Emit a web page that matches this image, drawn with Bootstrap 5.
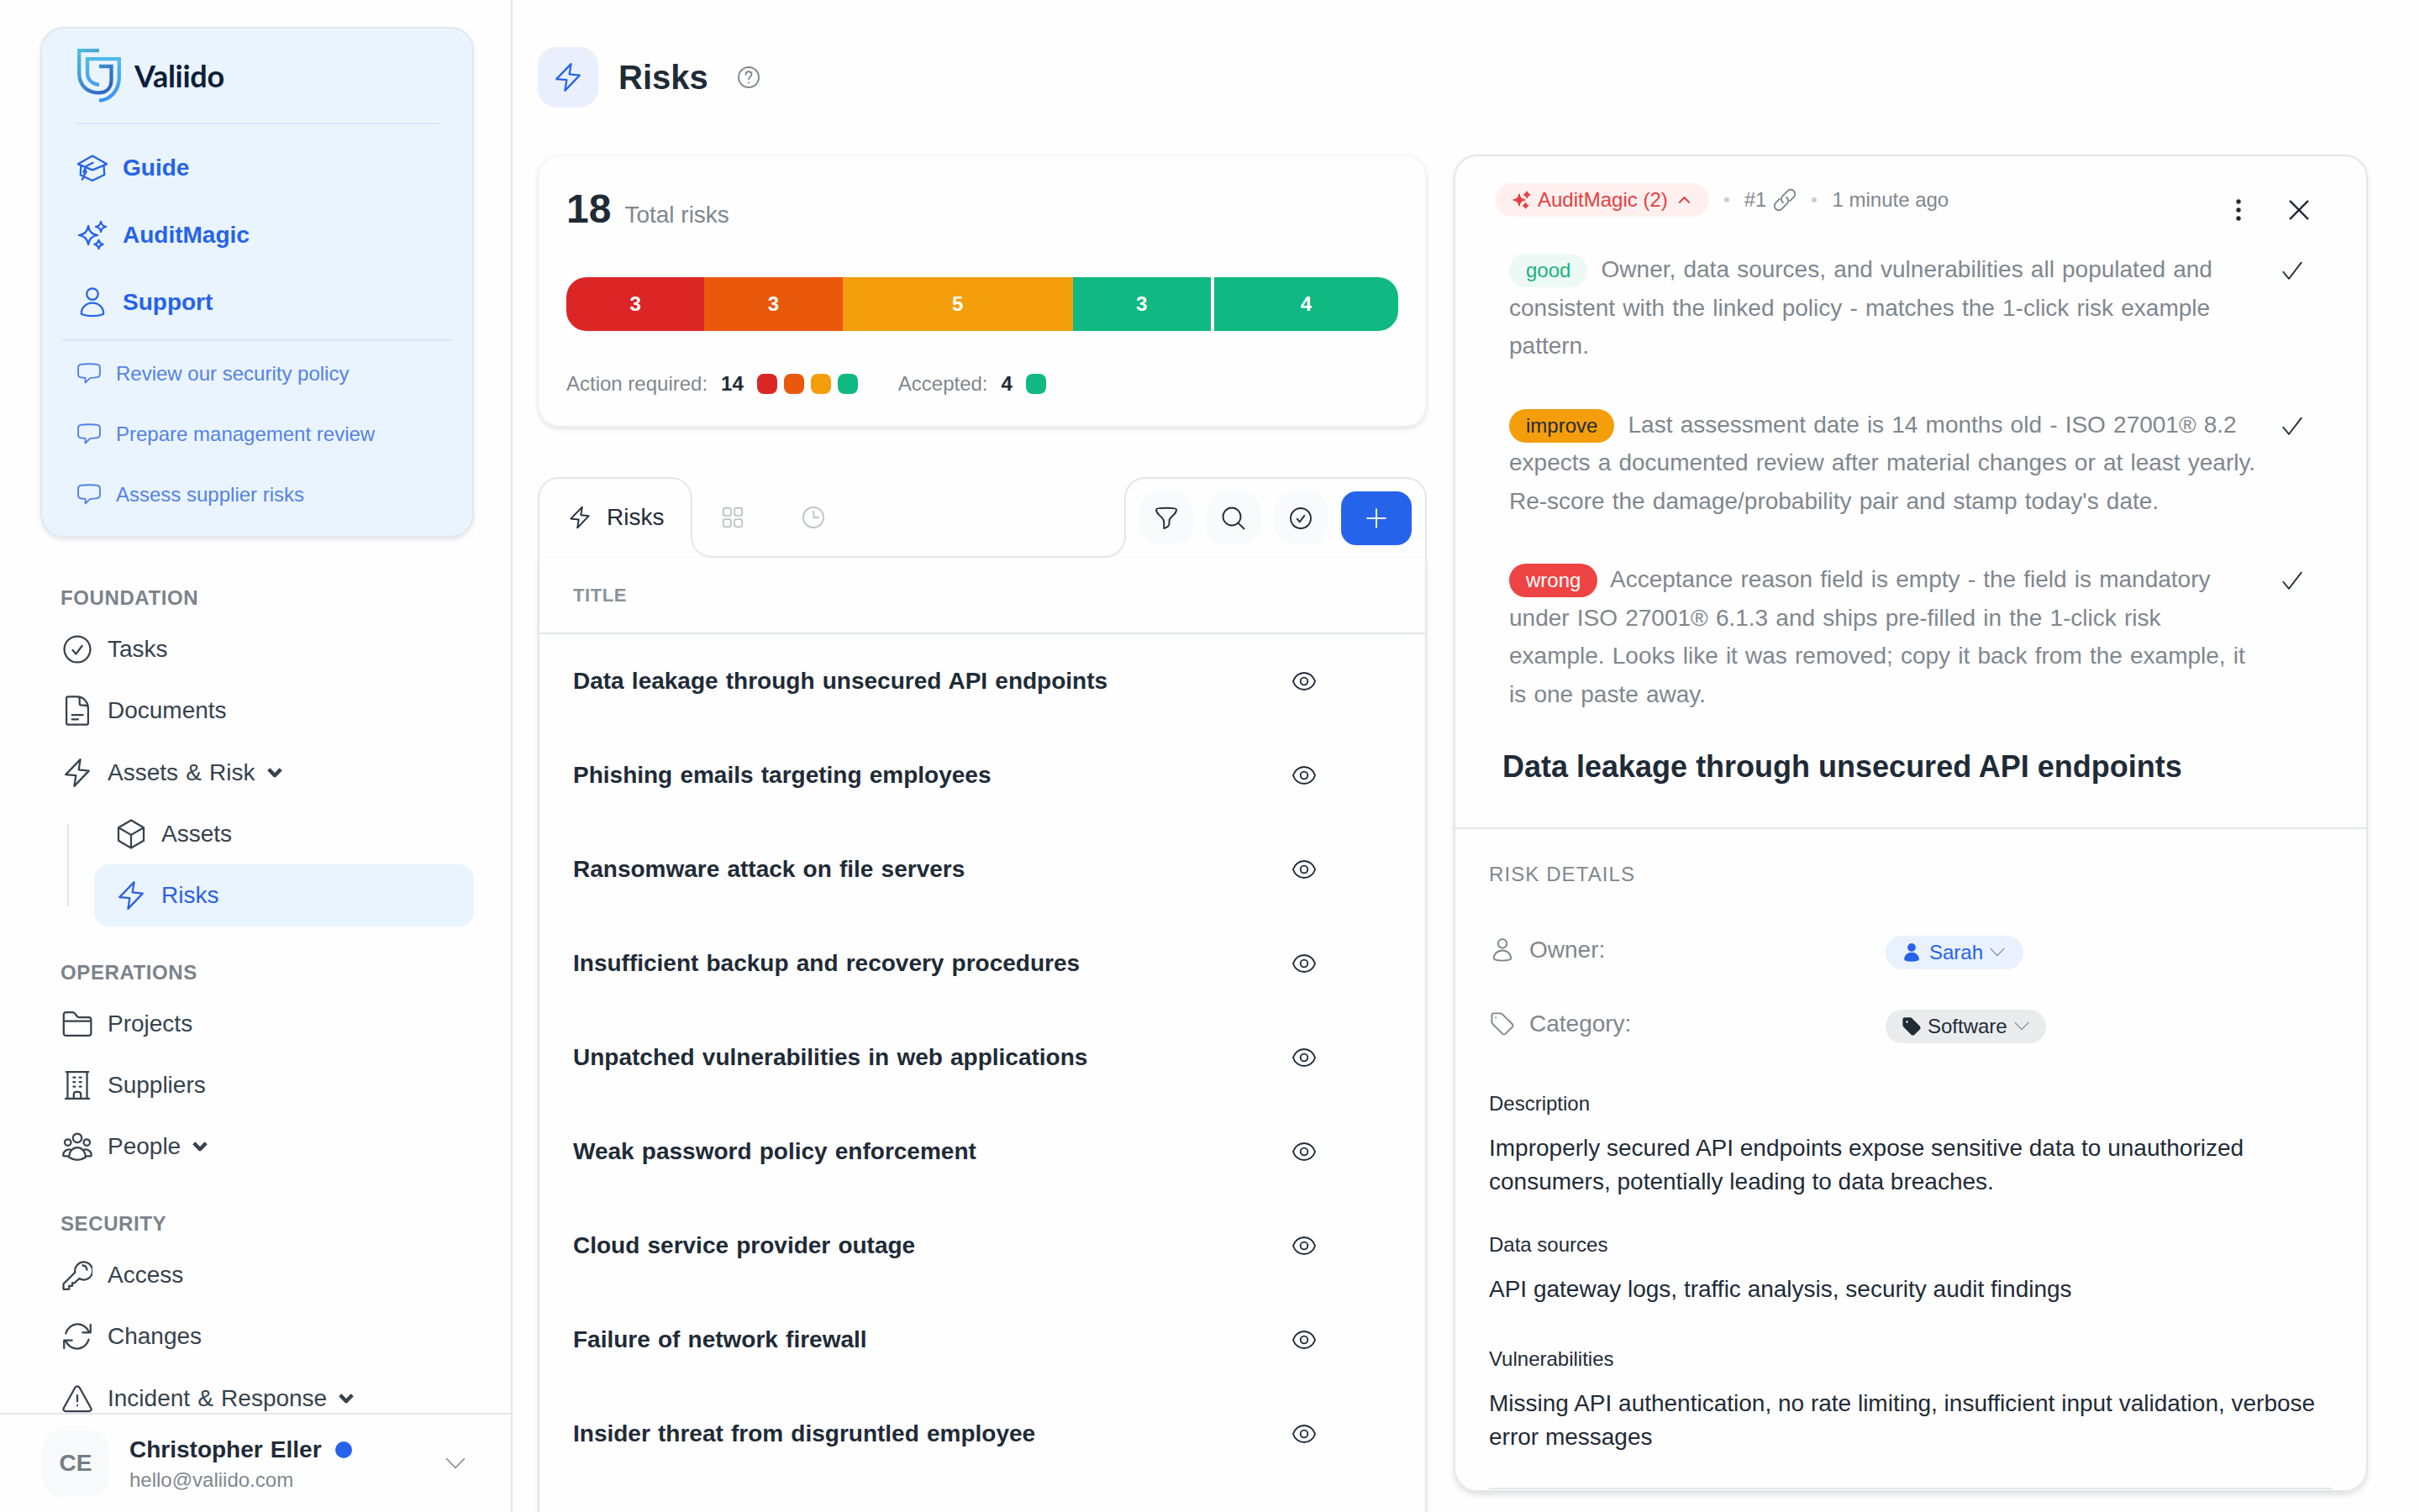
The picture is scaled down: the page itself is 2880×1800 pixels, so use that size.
<!DOCTYPE html>
<html lang="en">

<head>
    <meta charset="UTF-8">
    <meta name="viewport" content="width=device-width, initial-scale=1.0">
    <title>Risks - Valiido</title>
    <!-- Bootstrap CSS -->
    <link href="https://cdn.jsdelivr.net/npm/bootstrap@5.3.0/dist/css/bootstrap.min.css" rel="stylesheet">
    <style>
        :root {
            --ink: #1f2b37;
            --nav-ink: #36424d;
            --muted: #7f878e;
            --line: #e4e6e9;
            --blue: #2563eb;
            --sky: #eaf4fe;
        }

        body {
            font-family: "Liberation Sans", Arial, sans-serif;
            font-size: 28px;
            line-height: 42px;
            color: var(--ink);
            background: #fefefe;
            height: 1800px;
            overflow: hidden;
        }

        a {
            color: inherit;
            text-decoration: none;
        }

        .icon {
            flex: none;
            width: 28px;
            height: 28px;
            fill: none;
            stroke: currentColor;
            stroke-width: 1.6;
            stroke-linecap: round;
            stroke-linejoin: round;
        }

        .icon-lg {
            width: 36px;
            height: 36px;
            stroke-width: 1.5;
        }

        .icon-md {
            width: 26px;
            height: 26px;
            stroke-width: 2.2;
        }

        .icon-solid {
            width: 22px;
            height: 22px;
            fill: currentColor;
        }

        .fs-24 {
            font-size: 24px;
            line-height: 36px;
        }

        .muted {
            color: var(--muted);
        }

        .side-link,
        .risk-row,
        .note p,
        .account-name {
            word-spacing: 1.4px;
        }

        /* Sidebar */
        .sidebar {
            width: 610px;
            border-right: 2px solid var(--line);
        }

        .sidebar-scroll {
            height: 1682px;
            padding: 32px 44px 0 48px;
        }

        .promo {
            height: 608px;
            padding: 0 24px;
            background: var(--sky);
            border: 2px solid #e1e7ed;
            border-radius: 28px;
            box-shadow: 0 3px 5px rgba(30, 40, 60, .1);
        }

        .brand {
            height: 114px;
            margin: 0 16px;
            padding: 24px 0 0 2px;
            border-bottom: 2px solid #d9e5f5;
        }

        .brand-name {
            font-family: Lato, "Liberation Sans", sans-serif;
            font-size: 36px;
            font-weight: 700;
            line-height: 64px;
            letter-spacing: -.3px;
            margin-left: 16px;
            color: #0b1f3a;
        }

        .promo-main {
            padding-top: 12px;
            height: 258px;
            border-bottom: 2px solid #d9e5f5;
            font-weight: 700;
            color: var(--blue);
        }

        .promo-main a {
            height: 80px;
            padding-left: 18px;
            gap: 18px;
        }

        .promo-sub {
            padding-top: 3px;
        }

        .promo-sub a {
            height: 72px;
            padding-left: 18px;
            gap: 18px;
            font-size: 24px;
            color: #5382e6;
        }

        .nav-title {
            height: 79.8px;
            padding: 37px 0 0 24px;
            font-size: 24px;
            line-height: 36px;
            font-weight: 700;
            letter-spacing: .6px;
            color: #7b838b;
        }

        .first-title {
            margin-top: 16.8px;
        }

        .side-link {
            height: 73.2px;
            padding-left: 26px;
            gap: 18px;
            color: var(--nav-ink);
            border-radius: 18px;
        }

        .subnav {
            margin-left: 32px;
            padding-left: 32px;
            position: relative;
        }

        .subnav::before {
            content: "";
            position: absolute;
            left: 0;
            top: 24px;
            bottom: 24px;
            width: 2px;
            background: var(--line);
        }

        .side-link.active {
            background: var(--sky);
            color: #2b61e2;
        }

        .caret {
            width: 18px;
            height: 14px;
            stroke-width: 4.5;
            stroke-linecap: butt;
            margin-left: -4px;
        }

        .account {
            height: 118px;
            padding: 0 54px 0 50px;
            border-top: 2px solid var(--line);
            background: #fefefe;
        }

        .account-name {
            line-height: 36px;
        }

        .avatar {
            width: 80px;
            height: 80px;
            border-radius: 24px;
            background: #f8f9fb;
            color: #747d86;
            font-weight: 700;
        }

        .status-dot {
            width: 20px;
            height: 20px;
            background: var(--blue);
        }

        .chevron {
            width: 24px;
            height: 14px;
        }

        .chevron-sm {
            width: 18px;
            height: 11px;
            margin-left: 8px;
        }

        /* Main */
        .main-area {
            padding: 0 62px 0 30px;
        }

        .page-head {
            height: 184px;
        }

        .page-icon {
            width: 72px;
            height: 72px;
            border-radius: 22px;
            background: #e9effd;
            color: var(--blue);
        }

        .page-head h1 {
            font-size: 40px;
            line-height: 60px;
            font-weight: 700;
            margin: 0 34px 0 24px;
        }

        .left-col {
            width: 1058px;
        }

        .stats {
            height: 324px;
            padding: 33px 32px 0;
            border: 2px solid #f5f5f7;
            border-radius: 26px;
            box-shadow: 0 3px 5px rgba(30, 40, 60, .13);
        }

        .total {
            font-size: 48px;
            line-height: 60px;
            font-weight: 700;
        }

        .risk-bar {
            height: 64px;
            margin-top: 51px;
            border-radius: 24px;
            font-size: 24px;
            font-weight: 700;
            color: #fff;
        }

        .legend {
            margin-top: 45px;
        }

        .swatch {
            width: 24px;
            height: 24px;
            border-radius: 8px;
        }

        .c-red { background: #dc2626; }
        .c-orange { background: #ea580c; }
        .c-amber { background: #f59e0b; }
        .c-green { background: #10b981; }

        .tab-strip {
            height: 96px;
            margin-top: 60px;
            position: relative;
        }

        .tab-outline {
            position: absolute;
            inset: 0;
            fill: none;
            stroke: var(--line);
            stroke-width: 2;
        }

        .tab {
            width: 184px;
            padding-left: 36px;
            gap: 18px;
        }

        .tab-others {
            padding-left: 34px;
            gap: 68px;
            color: #bfc3c7;
        }

        .tool-group {
            gap: 16px;
            padding: 1px 18px 0 0;
        }

        .tool {
            width: 64px;
            height: 64px;
            border-radius: 24px;
            background: #f9fafc;
        }

        .tool-add {
            width: 84px;
            border-radius: 18px;
            background: var(--blue);
            color: #fff;
        }

        .risk-list {
            border: solid var(--line);
            border-width: 0 2px;
            box-shadow: 0 3px 5px rgba(30, 40, 60, .1);
            height: 1140px;
        }

        .risk-head {
            height: 91px;
            padding-left: 40px;
            font-size: 22px;
            font-weight: 700;
            letter-spacing: .6px;
            color: #8b9299;
            border-bottom: 2px solid var(--line);
        }

        .risk-row {
            height: 112px;
            padding: 0 130px 0 40px;
            font-weight: 700;
        }

        /* Detail panel */
        .detail {
            width: 1088px;
            height: 1592px;
            border: 2px solid var(--line);
            border-radius: 28px;
            box-shadow: 0 4px 6px rgba(30, 40, 60, .13);
            overflow: hidden;
        }

        .detail-top {
            height: 801px;
            border-bottom: 2px solid var(--line);
            padding: 32px 64px 0 48px;
        }

        .detail-bar {
            height: 40px;
        }

        .detail-actions {
            gap: 46px;
            padding: 19px 3px 0 0;
        }

        .pill {
            display: inline-flex;
            align-items: center;
            height: 40px;
            border-radius: 20px;
            padding: 0 20px;
            font-size: 24px;
            line-height: 40px;
            word-spacing: 0;
        }

        .pill-magic {
            background: #fff0ef;
            color: #e5403f;
            padding-right: 23px;
        }

        .pill-magic .chevron {
            width: 13px;
            height: 8px;
            margin-left: 13px;
            stroke-width: 3.6;
        }

        .pill-owner {
            background: #eaf1fe;
            color: var(--blue);
        }

        .pill-owner .icon-solid,
        .pill-owner .chevron-sm {
            margin-right: 2px;
        }

        .pill-category {
            background: #e9ebed;
        }

        .meta {
            gap: 18px;
        }

        .dot {
            width: 6px;
            height: 6px;
            background: #c9cdd1;
        }

        .notes {
            padding: 40px 10px 0 16px;
        }

        .note {
            margin-bottom: 48px;
        }

        .note p {
            width: 892px;
            margin: 0;
            line-height: 45.5px;
            color: var(--muted);
        }

        .note .pill {
            margin-right: 7px;
            vertical-align: baseline;
        }

        .note .icon {
            margin-top: 10px;
        }

        .p-good { background: #edf9f4; color: #19b37e; }
        .p-improve { background: #f59e0b; color: #1f2b37; }
        .p-wrong { background: #ef4444; color: #fff; }

        .detail h2 {
            font-size: 36px;
            line-height: 54px;
            font-weight: 700;
            margin: -11px 0 0 8px;
        }

        .detail-body {
            padding: 36px 40px 0;
        }

        .eyebrow {
            letter-spacing: 1.1px;
            margin-bottom: 28px;
        }

        .field {
            height: 88px;
        }

        .field .pill {
            margin-top: 5px;
        }

        .field-name {
            width: 472px;
            gap: 18px;
            padding-left: 2px;
        }

        .field-label {
            margin: 33px 0 15px;
        }

        .value + .field-label {
            margin-top: 37px;
        }

        .value {
            line-height: 40px;
        }

        .value-short {
            margin-bottom: 45px;
        }

        .value-short + .field-label {
            margin-top: 0;
        }

        .panel-rule {
            height: 2px;
            margin-top: 40px;
            background: var(--line);
        }
    </style>
</head>

<body>
    <!-- Icon set -->
    <svg class="d-none">
        <symbol id="bolt" viewBox="0 0 24 24"><path d="M14.4 1.4 2.8 13.4l8.1.7-1.3 8.5L21.2 10.4l-8.1-.8z" /></symbol>
        <symbol id="check-circle" viewBox="0 0 24 24"><circle cx="12" cy="12" r="10.3" /><path d="m8.3 12.6 2.6 3.1 4.8-6.4" /></symbol>
        <symbol id="cap" viewBox="0 0 24 24"><path d="M12 2.4 23.4 8.9 12 13.6.6 8.9zM2.8 10.3l-.3 7.2L12 22l9.5-4.7-.4-7M12.4 7.8 6 11v3.4M6.3 16 4 21.2" /><circle cx="6" cy="14.9" r="1" /></symbol>
        <symbol id="sparkles" viewBox="0 0 24 24"><path d="M8.7 4.6c1 4.8 2.6 6.4 7.4 7.4-4.8 1-6.4 2.6-7.4 7.4-1-4.8-2.6-6.4-7.4-7.4 4.8-1 6.4-2.6 7.4-7.4zM18.7 1.3c.6 2.6 1.4 3.4 4 4-2.6.6-3.4 1.4-4 4-.6-2.6-1.4-3.4-4-4 2.6-.6 3.4-1.4 4-4zM17 15.9c.5 2.2 1.2 2.9 3.4 3.4-2.2.5-2.9 1.2-3.4 3.4-.5-2.2-1.2-2.9-3.4-3.4 2.2-.5 2.9-1.2 3.4-3.4z" /></symbol>
        <symbol id="person" viewBox="0 0 24 24"><circle cx="12" cy="5.4" r="4.5" /><path d="M3.2 20.8c0-4.8 3.8-8.4 8.8-8.4s8.8 3.6 8.8 8.4c0 .4-.2.6-.6.7-2.6 1-5.2 1.3-8.2 1.3s-5.6-.3-8.2-1.3c-.4-.1-.6-.3-.6-.7z" /></symbol>
        <symbol id="chat" viewBox="0 0 24 24"><path d="M3.5 2.5c3.5-.8 13.5-.8 17 0 1.8.4 2.6 1 2.6 3v6.800c0 2.400-.9 3-2.700 3.200-3 .4-4.600.5-7.200.7L8.200 21v-4.800l-3.700-.3c-2.500-.2-3.600-1-3.600-3.400v-7c0-2 .8-2.600 2.600-3z" /></symbol>
        <symbol id="doc" viewBox="0 0 24 24"><path d="M4.700.9H12c4.800 0 8.600 4.200 8.600 9v12c0 .7-.5 1.200-1.200 1.200H4.600c-.7 0-1.200-.5-1.200-1.200V2.100C3.400 1.400 3.900.9 4.700.9zM12 .9c1.400 0 1.800.9 1.800 2.300v2.900c0 1 .6 1.600 1.600 1.600h2.200c1.600 0 3 .7 3 2.200M7.800 15.400h8.600M7.800 18.900h4.800" /></symbol>
        <symbol id="cube" viewBox="0 0 24 24"><path d="m12 1 10 5.800v10.400L12 23 2 17.200V6.800zM2 6.800l10 5.800 10-5.800M12 12.600V23" /></symbol>
        <symbol id="folder" viewBox="0 0 24 24"><path d="M1.200 19.300V4.700c0-1.200.9-2 2-2h5c.8 0 1.400.3 1.900 1l1.600 2.100c.4.6 1 .9 1.800.9H21c1.100 0 1.900.8 1.900 1.900v10.700c0 1.100-.8 2-2 2H3.200c-1.200 0-2-.9-2-2zM1.200 9.800h21.700" /></symbol>
        <symbol id="building" viewBox="0 0 24 24"><path d="M3.200 1.400h17.600M2.600 22.600h18.800M4.300 1.400v21.200M19.700 1.400v21.200M9.200 22.400v-3.200c0-1.200.8-2 2-2h1.600c1.200 0 2 .8 2 2v3.200M8.900 5.800h1.300M13.800 5.800h1.300M8.900 9.400h1.300M13.800 9.400h1.300M8.900 13h1.300M13.800 13h1.300" /></symbol>
        <symbol id="people" viewBox="0 0 24 24"><circle cx="12" cy="5.200" r="3.500" /><circle cx="4.500" cy="8.700" r="2.500" /><circle cx="19.500" cy="8.700" r="2.500" /><path d="M5.300 20.300c.3-4.600 3-7.600 6.700-7.600s6.400 3 6.700 7.600c-4.200 2.900-9.200 2.900-13.400 0zM5.200 19.600l-3.700-.1c-.5 0-.7-.2-.7-.6.200-2.700 2-4.600 5.400-4.600M18.800 19.600l3.700-.1c.5 0 .7-.2.7-.6-.2-2.700-2-4.600-5.400-4.600" /></symbol>
        <symbol id="key" viewBox="0 0 24 24"><path d="M10.200 9.800 1 19v4.200h4.500v-2.700H8v-2.300h1.900l3.700-3.500a7 7 0 1 0-3.400-4.900zM16.200 4.300c2 .2 3.200 1.500 3.400 3.400" /></symbol>
        <symbol id="refresh" viewBox="0 0 24 24"><path d="M2.900 9.600A9.600 9.600 0 0 1 21.200 8.500M22.500 2.600v6.300h-6.300M21.100 14.400A9.600 9.600 0 0 1 2.800 15.500M1.500 21.400v-6.300h6.300" /></symbol>
        <symbol id="warning" viewBox="0 0 24 24"><path d="M10.200 3.300c.8-1.500 2.800-1.500 3.600 0l9 16.200c.7 1.300-.2 2.600-1.600 2.600H2.800c-1.400 0-2.300-1.300-1.600-2.600zM12 9.400v4.800M12 17.400v.1" /></symbol>
        <symbol id="help" viewBox="0 0 24 24"><circle cx="12" cy="12" r="10.300" /><path d="M9 9.200c0-1.800 1.300-3 3-3s3 1.200 3 2.800c0 2.200-3 2.700-3 5M12 17.400v.1" /></symbol>
        <symbol id="grid" viewBox="0 0 24 24"><rect x="2.400" y="2.400" width="7.800" height="7.800" rx="2" /><rect x="13.800" y="2.400" width="7.800" height="7.800" rx="2" /><rect x="2.400" y="13.800" width="7.800" height="7.800" rx="2" /><rect x="13.800" y="13.800" width="7.800" height="7.800" rx="2" /></symbol>
        <symbol id="clock" viewBox="0 0 24 24"><circle cx="12" cy="12" r="10.300" /><path d="M12.300 5.600V12h5.200" /></symbol>
        <symbol id="filter" viewBox="0 0 24 24"><path d="M1.700 2.900c0-1 4.300-1.400 10.300-1.400s10.300.4 10.300 1.400c0 2.900-1.100 4-2.800 5.500l-2.600 2.500c-1.600 1.600-1.900 2.500-1.900 4v2.500c0 1.900-1.600 3.900-5.400 4.900v-6.100c0-2-.4-3.200-2-4.800L4.500 8.400C2.800 6.900 1.700 5.800 1.700 2.900z" /></symbol>
        <symbol id="search" viewBox="0 0 24 24"><circle cx="10.300" cy="10.300" r="9" /><path d="m17 17 5.700 5.700" /></symbol>
        <symbol id="plus" viewBox="0 0 24 24"><path d="M12 2.800v18.400M2.800 12h18.400" /></symbol>
        <symbol id="eye" viewBox="0 0 24 24"><path d="M.8 12C2.400 6.800 6.800 3.400 12 3.400s9.600 3.400 11.200 8.600c-1.600 5.200-6 8.600-11.200 8.600S2.400 17.200.8 12z" /><circle cx="12" cy="12" r="3.700" /></symbol>
        <symbol id="link" viewBox="0 0 24 24"><path d="M10.200 14.700c-2.100-1.700-2.300-4.700-.4-6.600l5.100-5.200c1.800-1.800 4.600-1.800 6.300-.1s1.700 4.500-.1 6.300l-3.900 4M13.800 9.300c2.100 1.700 2.300 4.700.4 6.600l-5.100 5.200c-1.800 1.800-4.600 1.800-6.300.1s-1.700-4.500.1-6.300l3.900-4" /></symbol>
        <symbol id="more" viewBox="0 0 24 24"><g fill="currentColor" stroke="none"><circle cx="12" cy="2.700" r="2.500" /><circle cx="12" cy="12" r="2.500" /><circle cx="12" cy="21.300" r="2.500" /></g></symbol>
        <symbol id="close" viewBox="0 0 24 24"><path d="m2.500 2.500 19 19M21.500 2.500l-19 19" /></symbol>
        <symbol id="check" viewBox="0 0 24 24"><path d="m2.800 13.500 5.800 6.900L21.200 4" /></symbol>
        <symbol id="tag" viewBox="0 0 24 24"><path d="M1.200 3.200c0-1.200.8-2 2-2h6.500c1 0 1.700.3 2.400 1l9.900 9.800c1 1 1 2.200 0 3.200l-6.800 6.800c-1 1-2.200 1-3.200 0L2.200 12.200c-.7-.8-1-1.400-1-2.400z" /><path d="M5.300 5.300v.1" /></symbol>
        <symbol id="tag-solid" viewBox="0 0 24 24"><path d="M1.200 3.200c0-1.200.8-2 2-2h6.500c1 0 1.700.3 2.400 1l9.900 9.800c1 1 1 2.200 0 3.200l-6.800 6.800c-1 1-2.200 1-3.200 0L2.200 12.200c-.7-.8-1-1.400-1-2.400z" /><circle cx="6" cy="6" r="1.300" fill="#fff" stroke="none" /></symbol>
        <symbol id="down" viewBox="0 0 24 14"><path d="m1.500 1.500 10.500 11 10.500-11" /></symbol>
        <symbol id="up" viewBox="0 0 24 14"><path d="M1.500 12.500 12 1.500l10.500 11" /></symbol>
        <symbol id="caret" viewBox="0 0 18 14"><path d="m1.800 2.800 7.200 7.400 7.200-7.400" /></symbol>
    </svg>

    <div class="d-flex h-100">
        <!-- Sidebar -->
        <aside class="sidebar d-flex flex-column flex-shrink-0">
            <div class="sidebar-scroll overflow-hidden">
                <div class="promo">
                    <div class="brand d-flex align-items-start">
                        <svg width="52" height="64" viewBox="0 0 52 64" fill="none" stroke-width="4.300">
                            <defs>
                                <linearGradient id="ga" x1="0" y1="0" x2=".8" y2="1"><stop stop-color="#4fbddb" /><stop offset="1" stop-color="#2f63c6" /></linearGradient>
                                <linearGradient id="gb" x1="0" y1="0" x2="0" y2="1"><stop stop-color="#52b8e9" /><stop offset="1" stop-color="#3a93f4" /></linearGradient>
                            </defs>
                            <path stroke="url(#ga)" d="M26 2.200H2.200V29c0 15 10 23.400 23.300 23.400 9.500 0 15-6 15-15.400V21H26" />
                            <path stroke="url(#gb)" d="M26 42.800C17.500 42 12 36.500 12 29V12.200h37.800V34C49.800 50 39 61 26 61.600" />
                        </svg>
                        <span class="brand-name">Valiido</span>
                    </div>
                    <nav class="promo-main">
                        <a href="#" class="d-flex align-items-center"><svg class="icon icon-lg"><use href="#cap" /></svg>Guide</a>
                        <a href="#" class="d-flex align-items-center"><svg class="icon icon-lg"><use href="#sparkles" /></svg>AuditMagic</a>
                        <a href="#" class="d-flex align-items-center"><svg class="icon icon-lg"><use href="#person" /></svg>Support</a>
                    </nav>
                    <nav class="promo-sub">
                        <a href="#" class="d-flex align-items-center"><svg class="icon"><use href="#chat" /></svg>Review our security policy</a>
                        <a href="#" class="d-flex align-items-center"><svg class="icon"><use href="#chat" /></svg>Prepare management review</a>
                        <a href="#" class="d-flex align-items-center"><svg class="icon"><use href="#chat" /></svg>Assess supplier risks</a>
                    </nav>
                </div>

                <div class="nav-title first-title">FOUNDATION</div>
                <a href="#" class="side-link d-flex align-items-center"><svg class="icon icon-lg"><use href="#check-circle" /></svg>Tasks</a>
                <a href="#" class="side-link d-flex align-items-center"><svg class="icon icon-lg"><use href="#doc" /></svg>Documents</a>
                <a href="#" class="side-link d-flex align-items-center"><svg class="icon icon-lg"><use href="#bolt" /></svg>Assets &amp; Risk<svg class="icon caret"><use href="#caret" /></svg></a>
                <div class="subnav">
                    <a href="#" class="side-link d-flex align-items-center"><svg class="icon icon-lg"><use href="#cube" /></svg>Assets</a>
                    <a href="#" class="side-link active d-flex align-items-center"><svg class="icon icon-lg"><use href="#bolt" /></svg>Risks</a>
                </div>
                <div class="nav-title">OPERATIONS</div>
                <a href="#" class="side-link d-flex align-items-center"><svg class="icon icon-lg"><use href="#folder" /></svg>Projects</a>
                <a href="#" class="side-link d-flex align-items-center"><svg class="icon icon-lg"><use href="#building" /></svg>Suppliers</a>
                <a href="#" class="side-link d-flex align-items-center"><svg class="icon icon-lg"><use href="#people" /></svg>People<svg class="icon caret"><use href="#caret" /></svg></a>
                <div class="nav-title">SECURITY</div>
                <a href="#" class="side-link d-flex align-items-center"><svg class="icon icon-lg"><use href="#key" /></svg>Access</a>
                <a href="#" class="side-link d-flex align-items-center"><svg class="icon icon-lg"><use href="#refresh" /></svg>Changes</a>
                <a href="#" class="side-link d-flex align-items-center"><svg class="icon icon-lg"><use href="#warning" /></svg>Incident &amp; Response<svg class="icon caret"><use href="#caret" /></svg></a>
            </div>
            <div class="account d-flex align-items-center">
                <div class="avatar d-flex align-items-center justify-content-center">CE</div>
                <div class="ms-4 pt-1">
                    <div class="account-name d-flex align-items-center fw-bold">Christopher Eller<span class="status-dot rounded-circle ms-3"></span></div>
                    <div class="fs-24 muted">hello@valiido.com</div>
                </div>
                <svg class="icon chevron ms-auto muted"><use href="#down" /></svg>
            </div>
        </aside>

        <!-- Main content -->
        <main class="main-area flex-grow-1">
            <header class="page-head d-flex align-items-center">
                <div class="page-icon d-flex align-items-center justify-content-center"><svg class="icon icon-lg"><use href="#bolt" /></svg></div>
                <h1>Risks</h1>
                <svg class="icon muted"><use href="#help" /></svg>
            </header>

            <div class="d-flex justify-content-between">
                <div class="left-col">
                    <section class="stats">
                        <div class="d-flex align-items-baseline gap-3">
                            <span class="total">18</span><span class="muted">Total risks</span>
                        </div>
                        <div class="risk-bar d-flex overflow-hidden" id="riskBar"></div>
                        <div class="legend d-flex align-items-center fs-24 gap-3">
                            <span class="muted">Action required:</span><b>14</b>
                            <span class="d-flex gap-2">
                                <i class="swatch c-red"></i><i class="swatch c-orange"></i><i class="swatch c-amber"></i><i class="swatch c-green"></i>
                            </span>
                            <span class="muted ms-3 ps-3">Accepted:</span><b>4</b><i class="swatch c-green"></i>
                        </div>
                    </section>

                    <div class="tab-strip d-flex align-items-center">
                        <svg class="tab-outline" width="1058" height="96" viewBox="0 0 1058 96">
                            <path d="M1 96V25A24 24 0 0 1 25 1H159a24 24 0 0 1 24 24V71a24 24 0 0 0 24 24H675a24 24 0 0 0 24-24V25a24 24 0 0 1 24-24H1033a24 24 0 0 1 24 24V96" />
                        </svg>
                        <a href="#" class="tab d-flex align-items-center"><svg class="icon"><use href="#bolt" /></svg>Risks</a>
                        <div class="tab-others d-flex">
                            <svg class="icon"><use href="#grid" /></svg>
                            <svg class="icon"><use href="#clock" /></svg>
                        </div>
                        <div class="tool-group d-flex ms-auto">
                            <div class="tool d-flex align-items-center justify-content-center"><svg class="icon"><use href="#filter" /></svg></div>
                            <div class="tool d-flex align-items-center justify-content-center"><svg class="icon"><use href="#search" /></svg></div>
                            <div class="tool d-flex align-items-center justify-content-center"><svg class="icon"><use href="#check-circle" /></svg></div>
                            <div class="tool tool-add d-flex align-items-center justify-content-center"><svg class="icon"><use href="#plus" /></svg></div>
                        </div>
                    </div>
                    <section class="risk-list">
                        <div class="risk-head d-flex align-items-center">TITLE</div>
                        <div id="riskRows"></div>
                    </section>
                </div>

                <section class="detail">
                    <div class="detail-top">
                        <div class="detail-bar d-flex align-items-start">
                            <div class="meta d-flex align-items-center fs-24 muted">
                                <span class="pill pill-magic"><svg class="icon icon-solid me-2"><use href="#sparkles" /></svg>AuditMagic (2)<svg class="icon chevron"><use href="#up" /></svg></span>
                                <i class="dot rounded-circle"></i>
                                <span class="d-flex align-items-center">#1<svg class="icon ms-2"><use href="#link" /></svg></span>
                                <i class="dot rounded-circle"></i>
                                <span>1 minute ago</span>
                            </div>
                            <div class="detail-actions d-flex align-items-center ms-auto">
                                <svg class="icon icon-md"><use href="#more" /></svg>
                                <svg class="icon icon-md"><use href="#close" /></svg>
                            </div>
                        </div>
                        <div class="notes">
                            <div class="note d-flex justify-content-between">
                                <p><span class="pill p-good">good</span> Owner, data sources, and vulnerabilities all populated and consistent with the linked policy - matches the 1-click risk example pattern.</p>
                                <svg class="icon"><use href="#check" /></svg>
                            </div>
                            <div class="note d-flex justify-content-between">
                                <p><span class="pill p-improve">improve</span> Last assessment date is 14 months old - ISO 27001® 8.2 expects a documented review after material changes or at least yearly. Re-score the damage/probability pair and stamp today's date.</p>
                                <svg class="icon"><use href="#check" /></svg>
                            </div>
                            <div class="note d-flex justify-content-between">
                                <p><span class="pill p-wrong">wrong</span> Acceptance reason field is empty - the field is mandatory under ISO 27001® 6.1.3 and ships pre-filled in the 1-click risk example. Looks like it was removed; copy it back from the example, it is one paste away.</p>
                                <svg class="icon"><use href="#check" /></svg>
                            </div>
                        </div>
                        <h2>Data leakage through unsecured API endpoints</h2>
                    </div>
                    <div class="detail-body">
                        <div class="fs-24 muted eyebrow">RISK DETAILS</div>
                        <div class="field d-flex align-items-center">
                            <div class="field-name d-flex align-items-center muted"><svg class="icon"><use href="#person" /></svg>Owner:</div>
                            <span class="pill pill-owner"><svg class="icon icon-solid"><use href="#person" /></svg><span class="ms-2">Sarah</span><svg class="icon chevron-sm muted"><use href="#down" /></svg></span>
                        </div>
                        <div class="field d-flex align-items-center">
                            <div class="field-name d-flex align-items-center muted"><svg class="icon"><use href="#tag" /></svg>Category:</div>
                            <span class="pill pill-category"><svg class="icon icon-solid"><use href="#tag-solid" /></svg><span class="ms-2">Software</span><svg class="icon chevron-sm muted"><use href="#down" /></svg></span>
                        </div>
                        <div class="fs-24 field-label">Description</div>
                        <div class="value">Improperly secured API endpoints expose sensitive data to unauthorized consumers, potentially leading to data breaches.</div>
                        <div class="fs-24 field-label">Data sources</div>
                        <div class="value value-short">API gateway logs, traffic analysis, security audit findings</div>
                        <div class="fs-24 field-label">Vulnerabilities</div>
                        <div class="value">Missing API authentication, no rate limiting, insufficient input validation, verbose error messages</div>
                        <div class="panel-rule"></div>
                    </div>
                </section>
            </div>
        </main>
    </div>

    <script>
        // Severity segments, the last one is the accepted group
        const segments = [
            { count: 3, cls: "c-red" },
            { count: 3, cls: "c-orange" },
            { count: 5, cls: "c-amber" },
            { count: 3, cls: "c-green" },
            { count: 4, cls: "c-green", accepted: true }
        ];
        const total = segments.reduce((sum, s) => sum + s.count, 0);
        document.getElementById("riskBar").innerHTML = segments.map(s =>
            `<div class="${s.cls} d-flex align-items-center justify-content-center" style="width:calc((100% - 4px) * ${s.count / total});${s.accepted ? "margin-left:4px" : ""}">${s.count}</div>`
        ).join("");

        const risks = [
            "Data leakage through unsecured API endpoints",
            "Phishing emails targeting employees",
            "Ransomware attack on file servers",
            "Insufficient backup and recovery procedures",
            "Unpatched vulnerabilities in web applications",
            "Weak password policy enforcement",
            "Cloud service provider outage",
            "Failure of network firewall",
            "Insider threat from disgruntled employee"
        ];
        document.getElementById("riskRows").innerHTML = risks.map(title =>
            `<div class="risk-row d-flex align-items-center justify-content-between"><span>${title}</span><svg class="icon"><use href="#eye" /></svg></div>`
        ).join("");
    </script>

    <!-- Bootstrap JS -->
    <script src="https://cdn.jsdelivr.net/npm/bootstrap@5.3.0/dist/js/bootstrap.bundle.min.js"></script>
</body>

</html>
